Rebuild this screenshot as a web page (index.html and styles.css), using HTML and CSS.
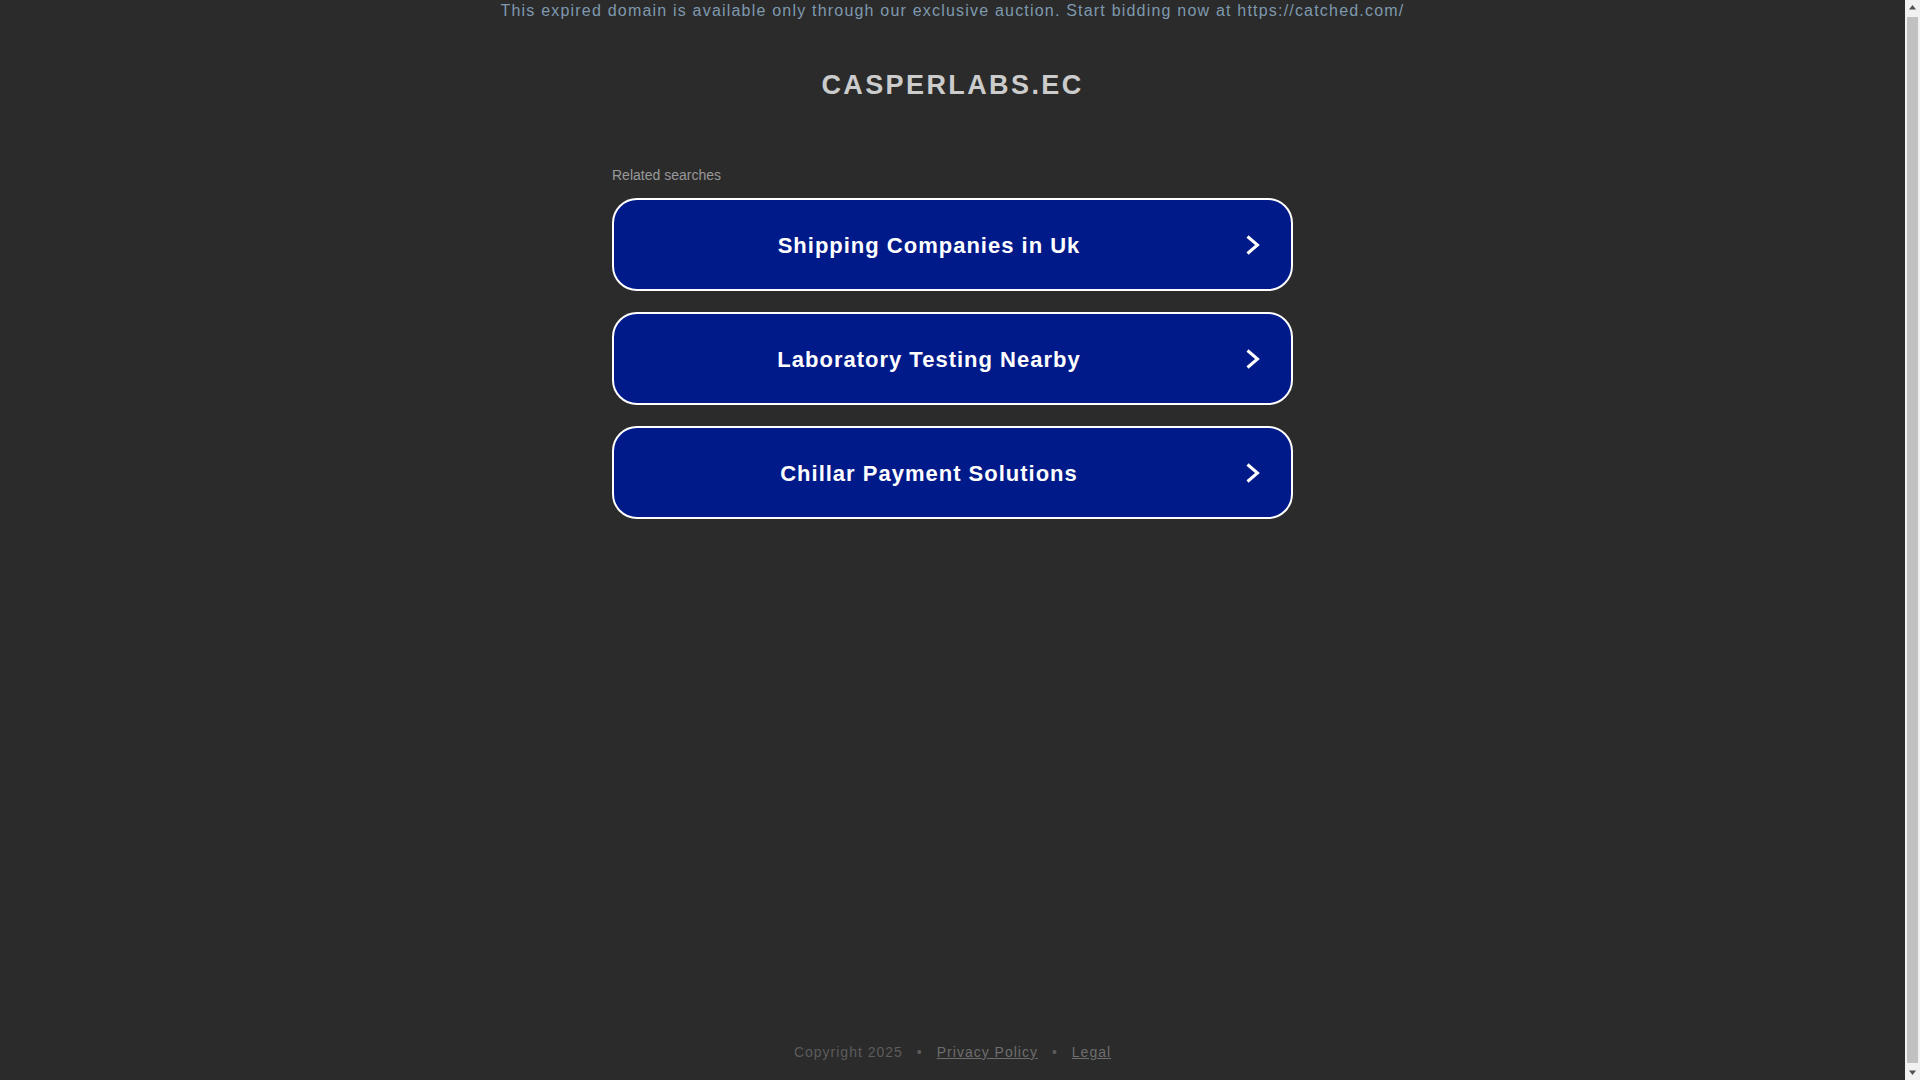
FILE: index.html
```html
<!DOCTYPE html>
<html lang="en">
<head>
<meta charset="utf-8">
<title>casperlabs.ec</title>
<link rel="stylesheet" href="styles.css">
</head>
<body>
<div class="page">
  <div class="announcement">This expired domain is available only through our exclusive auction. Start bidding now at https://catched.com/</div>
  <h1 class="domain">CASPERLABS.EC</h1>
  <div class="related">
    <div class="related-title">Related searches</div>
    <a class="search-btn" href="#"><span class="search-text">Shipping Companies in Uk</span><svg class="chev" width="20" height="24" viewBox="0 0 20 24"><polyline points="3.5,3.5 13.5,12 3.5,20.5" fill="none" stroke="#fff" stroke-width="3"/></svg></a>
    <a class="search-btn" href="#"><span class="search-text">Laboratory Testing Nearby</span><svg class="chev" width="20" height="24" viewBox="0 0 20 24"><polyline points="3.5,3.5 13.5,12 3.5,20.5" fill="none" stroke="#fff" stroke-width="3"/></svg></a>
    <a class="search-btn" href="#"><span class="search-text">Chillar Payment Solutions</span><svg class="chev" width="20" height="24" viewBox="0 0 20 24"><polyline points="3.5,3.5 13.5,12 3.5,20.5" fill="none" stroke="#fff" stroke-width="3"/></svg></a>
  </div>
  <div class="footer">
    <span class="copy">Copyright 2025</span>
    <span class="dot">•</span>
    <a class="flink" href="#">Privacy Policy</a>
    <span class="dot">•</span>
    <a class="flink" href="#">Legal</a>
  </div>
</div>
<div class="scrollbar">
  <div class="sb-btn"><svg width="15" height="15" viewBox="0 0 15 15"><polygon points="4,9.5 11,9.5 7.5,5" fill="#505050"/></svg></div>
  <div class="sb-track"><div class="sb-thumb"></div></div>
  <div class="sb-btn"><svg width="15" height="15" viewBox="0 0 15 15"><polygon points="4,5.5 11,5.5 7.5,10" fill="#505050"/></svg></div>
</div>
</body>
</html>
```
FILE: styles.css
```css
html, body {
  margin: 0;
  padding: 0;
  background: #2b2b2b;
}
body {
  font-family: "Liberation Sans", Arial, sans-serif;
}
.page {
  box-sizing: border-box;
  min-height: 1090px;
  padding-right: 15px;
  display: flex;
  flex-direction: column;
  align-items: center;
}
.announcement {
  font-size: 16px;
  line-height: 22px;
  letter-spacing: 1.2px;
  color: #7f99ae;
  text-align: center;
}
.domain {
  margin: 48px 0 0;
  font-size: 27px;
  line-height: 31px;
  font-weight: bold;
  letter-spacing: 2.4px;
  color: #cccccc;
}
.related {
  margin-top: 66px;
  width: 681px;
  display: flex;
  flex-direction: column;
}
.related-title {
  font-size: 14px;
  line-height: 16px;
  color: #999999;
  margin-bottom: 15px;
}
.search-btn {
  box-sizing: border-box;
  height: 93px;
  margin-bottom: 21px;
  border: 2px solid #ffffff;
  border-radius: 25px;
  background: #011a8a;
  display: flex;
  align-items: center;
  padding-right: 27px;
  text-decoration: none;
  color: #ffffff;
}
.search-text {
  flex: 1;
  padding-top: 2px;
  text-align: center;
  font-size: 22px;
  font-weight: bold;
  letter-spacing: 1px;
  color: #ffffff;
}
.chev {
  display: block;
  flex: none;
}
.footer {
  margin-top: auto;
  padding-bottom: 30px;
  font-size: 14px;
  line-height: 16px;
  letter-spacing: 1px;
  display: flex;
  align-items: center;
}
.copy {
  color: #5c5c5c;
}
.dot {
  color: #5c5c5c;
  margin: 0 14px;
}
.flink {
  color: #6e6e6e;
  text-decoration: underline;
}
.scrollbar {
  position: fixed;
  top: 0;
  right: 0;
  width: 15px;
  height: 100vh;
  background: #f1f1f1;
  display: flex;
  flex-direction: column;
}
.sb-btn {
  height: 15px;
  flex: none;
}
.sb-btn svg {
  display: block;
}
.sb-track {
  flex: 1;
  padding: 2px 2px;
  display: flex;
}
.sb-thumb {
  flex: 1;
  background: #c1c1c1;
  border-radius: 0;
}
```
